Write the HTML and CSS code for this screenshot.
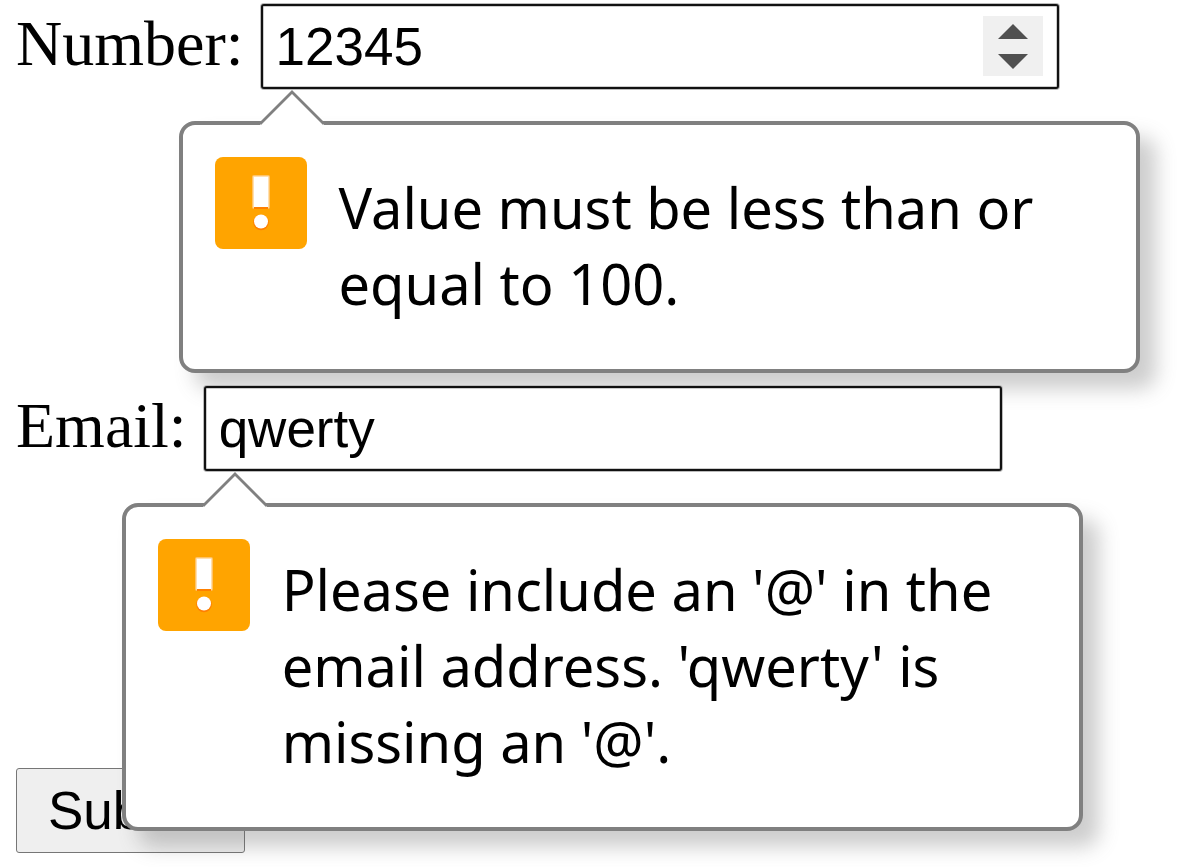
FILE: index.html
```html
<!DOCTYPE html>
<html lang="en">
<head>
<meta charset="utf-8">
<title>Form validation</title>
<link rel="stylesheet" href="styles.css">
</head>
<body>
<svg class="defs" aria-hidden="true">
  <symbol id="warning" viewBox="0 0 92 92">
    <rect width="92" height="92" rx="8" fill="#ffa400"/>
    <rect x="37" y="18" width="18" height="34" rx="2" fill="#ffc266"/>
    <rect x="38" y="19" width="16" height="32" rx="1" fill="#ffe0b0"/>
    <rect x="39" y="50" width="14" height="2" fill="#ff8000"/>
    <circle cx="46" cy="65.500" r="7.800" fill="#ff8000"/>
    <rect x="39" y="20" width="14" height="30" fill="#fff"/>
    <circle cx="46" cy="64.500" r="7" fill="#fff"/>
  </symbol>
  <symbol id="arrow" viewBox="0 0 68 36">
    <path d="M2 36V35L34 3L66 35V36Z" fill="#fff"/>
    <path d="M2 35L34 3L66 35" fill="none" stroke="#808080" stroke-width="2.800"/>
  </symbol>
</svg>
<form class="form" novalidate>
  <div class="field">
    <label for="number">Number:</label>
    <div class="control">
      <input class="input" id="number" type="number" max="100" value="12345" aria-describedby="number-error">
      <span class="spinner">
        <button class="step" type="button" aria-label="Increase"><svg viewBox="0 0 30 15"><path d="M0 15L15 0L30 15Z"/></svg></button>
        <button class="step" type="button" aria-label="Decrease"><svg viewBox="0 0 30 15"><path d="M0 0L15 15L30 0Z"/></svg></button>
      </span>
      <div class="bubble" id="number-error" role="alert">
        <svg class="arrow"><use href="#arrow"/></svg>
        <svg class="icon"><use href="#warning"/></svg>
        <p class="message">Value must be less than or equal to 100.</p>
      </div>
    </div>
  </div>
  <div class="field">
    <label for="email">Email:</label>
    <div class="control">
      <input class="input" id="email" type="email" value="qwerty" aria-describedby="email-error">
      <div class="bubble" id="email-error" role="alert">
        <svg class="arrow"><use href="#arrow"/></svg>
        <svg class="icon"><use href="#warning"/></svg>
        <p class="message">Please include an '@' in the email address. 'qwerty' is missing an '@'.</p>
      </div>
    </div>
  </div>
  <button class="submit" type="submit">Submit</button>
</form>
</body>
</html>
```
FILE: styles.css
```css
* {
  box-sizing: border-box;
}

body {
  margin: 0;
  background: #fff;
  color: #000;
  font-family: "Liberation Serif", serif;
  font-size: 64px;
}

.defs {
  display: none;
}

.form {
  display: flex;
  flex-direction: column;
  align-items: flex-start;
  gap: 297px;
  padding: 4px 16px 14px;
}

.field {
  display: flex;
  align-items: baseline;
  gap: 17px;
  width: 100%;
  height: 85px;
}

.control {
  position: relative;
  flex: 0 1 798px;
}

.input {
  position: relative;
  display: block;
  width: 100%;
  height: 85px;
  padding: 0 13px;
  border: 2px solid #111;
  border-radius: 3px;
  outline: none;
  background: #fff;
  box-shadow: 0 0 0 1px #bbb, inset 0 0 0 1px #ccc;
  color: #000;
  font: 53px "Liberation Sans", sans-serif;
  appearance: textfield;
}

.input::-webkit-inner-spin-button {
  display: none;
}

.spinner {
  position: absolute;
  top: 12px;
  right: 16px;
  display: flex;
  flex-direction: column;
  width: 60px;
  height: 60px;
  background: #f0f0f0;
}

.step {
  display: flex;
  flex: 1;
  align-items: center;
  justify-content: center;
  padding: 0;
  border: 0;
  background: none;
}

.step svg {
  width: 30px;
  height: 15px;
  fill: #505050;
}

.bubble {
  position: absolute;
  top: 117px;
  left: -82px;
  display: flex;
  align-items: flex-start;
  gap: 32px;
  width: 961px;
  padding: 32px;
  border: 4px solid #808080;
  border-radius: 16px;
  background: #fff;
  box-shadow: 16px 16px 20px rgba(100, 100, 100, 0.32);
}

.arrow {
  position: absolute;
  top: -36px;
  left: 75px;
  width: 68px;
  height: 36px;
}

.icon {
  flex: none;
  width: 92px;
  height: 92px;
}

.message {
  margin: 12px 0 16px;
  font: 56px/76px "Noto Sans", sans-serif;
}

.submit {
  height: 85px;
  padding: 0 31px;
  border: 1px solid #767676;
  border-radius: 3px;
  background: #efefef;
  color: #000;
  font: 53px "Liberation Sans", sans-serif;
}
```
